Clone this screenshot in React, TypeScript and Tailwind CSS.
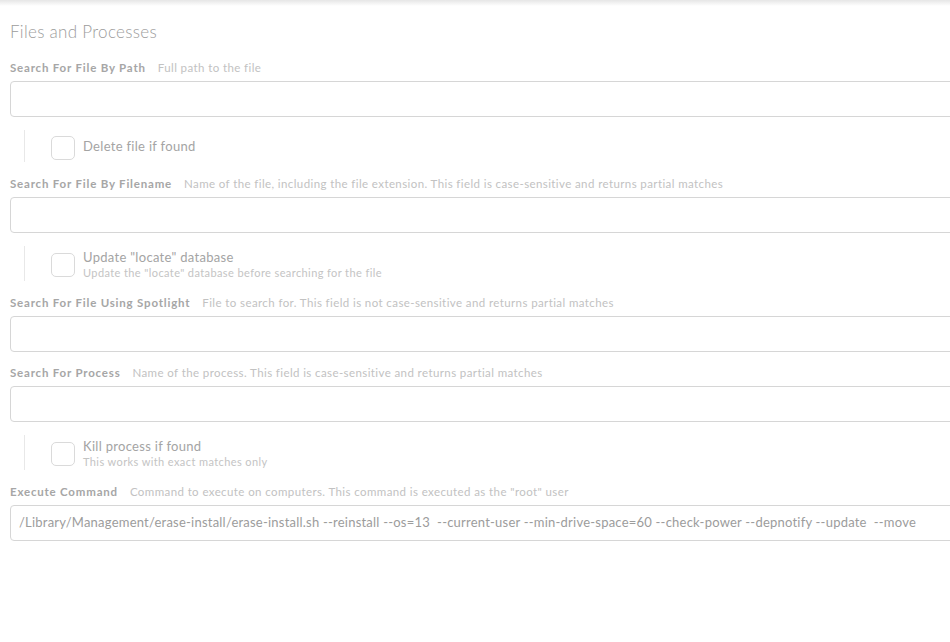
import React from "react";

interface FieldProps {
  label: string;
  hint: string;
  value?: string;
}

const Field = ({ label, hint, value }: FieldProps) => {
  return (
    <div>
      <div className="flex items-baseline gap-[12px] h-[22px] leading-[22px]">
        <span className="text-[11.5px] font-bold text-[#a6a6a6] tracking-[0.8px]">
          {label}
        </span>
        <span className="text-[11.5px] text-[#c2c2c2] tracking-[0.4px]">{hint}</span>
      </div>
      <div className="mt-[2px] h-[36px] w-[960px] rounded-[4px] border border-[#d6d6d6] bg-white flex items-center px-2">
        {value && (
          <span className="text-[13px] text-[#9c9c9c] whitespace-pre tracking-[0.22px]">
            {value}
          </span>
        )}
      </div>
    </div>
  );
};

interface CheckProps {
  label: string;
  sub?: string;
}

const CheckRow = ({ label, sub }: CheckProps) => {
  return (
    <div className="flex ml-[14px] mt-[13px] mb-[11px]">
      <div className="w-px bg-[#e8e8e8] self-stretch" />
      <div
        className={`flex items-start pl-[26px] gap-[8px] ${
          sub ? "pt-[7px] pb-[4px]" : "pt-[6px] pb-[2px]"
        }`}
      >
        <div className="w-[24px] h-[24px] rounded-[5px] border border-[#dadada] bg-white" />
        <div className={sub ? "-mt-[5px] -mb-[4px]" : "mt-[1px]"}>
          <div className="text-[13px] text-[#a4a4a4] leading-[18px] tracking-[0.3px]">
            {label}
          </div>
          {sub && (
            <div className="text-[11px] text-[#c4c4c4] leading-[14px] tracking-[0.4px]">
              {sub}
            </div>
          )}
        </div>
      </div>
    </div>
  );
};

const App = () => {
  return (
    <div
      className="relative w-[950px] h-[642px] bg-white overflow-hidden"
      style={{ fontFamily: "Lato, 'Open Sans', sans-serif" }}
    >
      <div className="absolute top-0 left-0 right-0 h-[6px] bg-gradient-to-b from-[#e6e6e6] to-white" />
      <div className="pl-[10px] pt-[21px]">
        <h1 className="text-[17px] font-light text-[#9c9c9c] leading-[22px] mb-[14px] tracking-[0.3px]">
          Files and Processes
        </h1>
        <Field label="Search For File By Path" hint="Full path to the file" />
        <CheckRow label="Delete file if found" />
        <Field
          label="Search For File By Filename"
          hint="Name of the file, including the file extension. This field is case-sensitive and returns partial matches"
        />
        <CheckRow
          label={'Update "locate" database'}
          sub={'Update the "locate" database before searching for the file'}
        />
        <Field
          label="Search For File Using Spotlight"
          hint="File to search for. This field is not case-sensitive and returns partial matches"
        />
        <div className="h-[10px]" />
        <Field
          label="Search For Process"
          hint="Name of the process. This field is case-sensitive and returns partial matches"
        />
        <CheckRow label="Kill process if found" sub="This works with exact matches only" />
        <Field
          label="Execute Command"
          hint={'Command to execute on computers. This command is executed as the "root" user'}
          value="/Library/Management/erase-install/erase-install.sh --reinstall --os=13  --current-user --min-drive-space=60 --check-power --depnotify --update  --move"
        />
      </div>
    </div>
  );
};

export default App;
